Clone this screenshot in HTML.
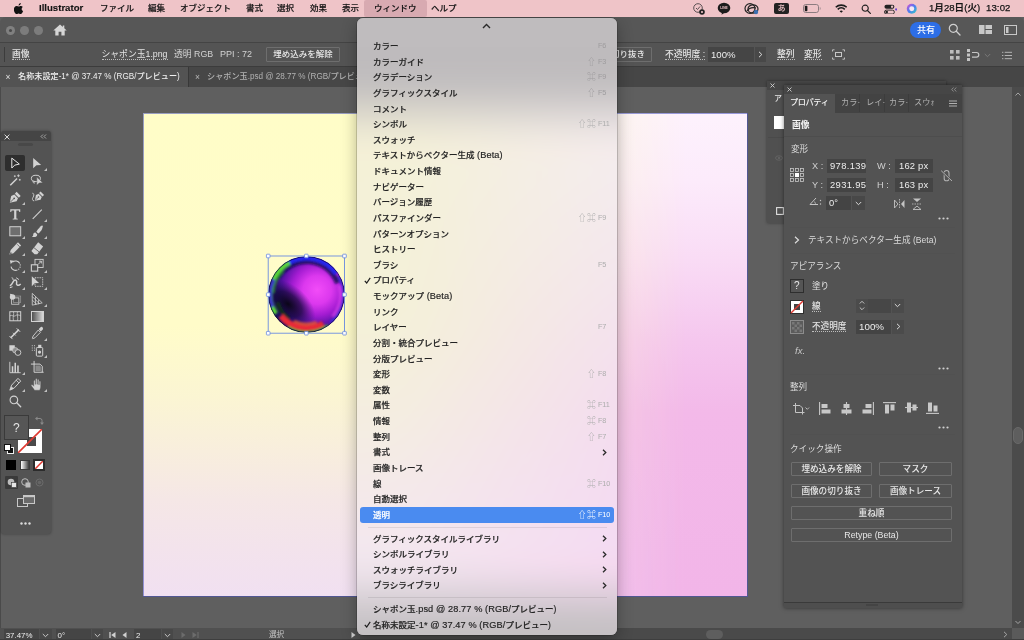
<!DOCTYPE html>
<html lang="ja">
<head>
<meta charset="utf-8">
<title>Illustrator</title>
<style>
*{box-sizing:border-box;margin:0;padding:0}
html,body{width:1024px;height:640px;overflow:hidden;background:#5f5f5f}
body{font-family:"Liberation Sans","Noto Sans CJK JP",sans-serif;font-size:9px;color:#e4e4e4;position:relative;-webkit-font-smoothing:antialiased}
.abs{position:absolute}
.t{position:absolute;white-space:nowrap;line-height:12px;height:12px}
.u{border-bottom:1px dotted #bdbdbd}
/* mac menubar */
#menubar{left:0;top:0;width:1024px;height:17px;background:#efc4c8;color:#111}
#menubar .t{font-size:8.5px;top:2px;color:#141414;font-weight:500;-webkit-text-stroke:.15px #141414}
/* app window */
#win{left:0;top:17px;width:1024px;height:623px;background:#5f5f5f;border-radius:6px 6px 0 0;overflow:hidden}
#titlebar{left:0;top:0;width:1024px;height:25px;background:#575757}
#ctrl{left:0;top:25px;width:1024px;height:24px;background:#545454;border-top:1px solid #444}
#tabs{left:0;top:49px;width:1024px;height:21px;background:#464646;border-top:1px solid #3c3c3c}
.tl{width:9px;height:9px;border-radius:50%;background:#7c7c7c;top:9px}
.btn{position:absolute;border:1px solid #6e6e6e;border-radius:1px;text-align:center;white-space:nowrap;color:#e8e8e8}
.inp{position:absolute;background:#444;color:#eee;white-space:nowrap;overflow:hidden}
.mi{font-size:8.500px;font-weight:500;-webkit-text-stroke:.18px}
.la{font-size:9.200px;letter-spacing:.1px}
.sc{font-size:7.300px;letter-spacing:-.15px}
.sy{font-family:"Noto Sans CJK JP","DejaVu Sans",sans-serif;font-size:8.800px;letter-spacing:.3px;font-weight:500}
</style>
</head>
<body>
<div id="root" class="abs" style="left:0;top:0;width:1024px;height:640px;will-change:transform">
<!-- ===== APP WINDOW ===== -->
<div id="win" class="abs">
  <div id="titlebar" class="abs">
    <div class="abs tl" style="left:6px;background:#808080"></div>
    <div class="abs" style="left:9px;top:12px;width:3px;height:3px;border-radius:50%;background:#4a4a4a"></div>
    <div class="abs tl" style="left:20px"></div>
    <div class="abs tl" style="left:34px"></div>
    <svg class="abs" style="left:53px;top:7px" width="14" height="12" viewBox="0 0 14 12"><path d="M7 .5L.3 6.400h2V11.500h3.300V7.800h2.800v3.700h3.300V6.400h2L11.300 4.300V1.500H9.800v1.500z" fill="#d6d6d6"/></svg>
    <div class="abs" style="left:910px;top:5px;width:31px;height:16px;border-radius:8px;background:#2d6ee6"></div>
    <span class="t" style="left:917px;top:7px;color:#fff;font-size:9px;font-weight:500">共有</span>
    <svg class="abs" style="left:948px;top:6px" width="13" height="13" viewBox="0 0 13 13"><circle cx="5.300" cy="5.300" r="4" fill="none" stroke="#cfcfcf" stroke-width="1.200"/><path d="M8.300 8.300l3.700 3.700" stroke="#cfcfcf" stroke-width="1.300" stroke-linecap="round"/></svg>
    <svg class="abs" style="left:979px;top:8px" width="13" height="9" viewBox="0 0 13 9"><rect x="0" y="0" width="5.500" height="9" fill="#c8c8c8"/><rect x="6.500" y="0" width="6.500" height="4" fill="#c8c8c8"/><rect x="6.500" y="5" width="6.500" height="4" fill="#c8c8c8"/></svg>
    <svg class="abs" style="left:1004px;top:8px" width="13" height="10" viewBox="0 0 13 10"><rect x=".5" y=".5" width="12" height="9" fill="none" stroke="#c8c8c8" stroke-width="1"/><rect x="2" y="2" width="2.500" height="6" fill="#c8c8c8"/></svg>
  </div>
  <div id="ctrl" class="abs">
    <div class="abs" style="left:4px;top:4px;width:1px;height:15px;background:#3c3c3c"></div>
    <span class="t u" style="left:12px;top:5px;font-size:8.800px;font-weight:500">画像</span>
    <span class="t u" style="left:101.500px;top:5px;font-size:8.800px">シャポン玉1.png</span>
    <span class="t" style="left:174px;top:5px;font-size:8.800px;color:#d2d2d2">透明 RGB</span>
    <span class="t" style="left:220px;top:5px;font-size:9px;color:#d2d2d2">PPI : 72</span>
    <div class="btn" style="left:266px;top:4px;width:74px;height:15px;line-height:13px;font-size:8.500px;font-weight:500">埋め込みを解除</div>
    <div class="abs" style="left:610px;top:0;width:50px;height:24px;overflow:hidden"><div class="btn" style="left:-30px;top:4px;width:72px;height:15px;line-height:13px;font-size:8.500px;font-weight:500;text-align:right;padding-right:6px">画像の切り抜き</div></div>
    <span class="t u" style="left:665px;top:5px;font-size:8.800px;font-weight:500">不透明度 :</span>
    <div class="inp" style="left:708px;top:4px;width:46px;height:15px;line-height:15px;padding-left:3px;font-size:9.600px;background:#454545">100%</div>
    <div class="abs" style="left:755px;top:4px;width:11px;height:15px;background:#484848"></div>
    <svg class="abs" style="left:758px;top:8px" width="5" height="7" viewBox="0 0 5 7"><path d="M1 .8l2.800 2.700L1 6.200" fill="none" stroke="#ddd" stroke-width="1"/></svg>
    <span class="t u" style="left:777px;top:5px;font-size:8.800px;font-weight:500">整列</span>
    <span class="t u" style="left:804px;top:5px;font-size:8.800px;font-weight:500">変形</span>
    <svg class="abs" style="left:832px;top:6px" width="13" height="11" viewBox="0 0 13 11"><rect x="3.500" y="3.500" width="6" height="4" fill="none" stroke="#c8c8c8" stroke-width="1"/><path d="M.5 2.500V.8h2M10.500.8h2v1.700M.5 8.500v1.700h2M10.500 10.200h2V8.500" fill="none" stroke="#c8c8c8" stroke-width=".9"/></svg>
    <svg class="abs" style="left:950px;top:7px" width="10" height="10" viewBox="0 0 10 10"><g fill="#bdbdbd"><rect x="0" y="0" width="3.600" height="3.600"/><rect x="6" y="0" width="3.600" height="3.600"/><rect x="0" y="6" width="3.600" height="3.600"/><rect x="6" y="6" width="3.600" height="3.600"/></g></svg>
    <svg class="abs" style="left:967px;top:6px" width="14" height="12" viewBox="0 0 14 12"><g fill="#c4c4c4"><rect x="0" y="0" width="3" height="3"/><rect x="0" y="4.500" width="3" height="3"/><rect x="0" y="9" width="3" height="3"/></g><path d="M5 3.500h4.500a2.300 2.300 0 0 1 0 4.600H5" fill="none" stroke="#c4c4c4" stroke-width="1.200"/></svg>
    <svg class="abs" style="left:984px;top:10px" width="7" height="5" viewBox="0 0 7 5"><path d="M.8 1l2.700 2.700L6.200 1" fill="none" stroke="#7a7a7a" stroke-width="1"/></svg>
    <svg class="abs" style="left:1002px;top:8px" width="10" height="9" viewBox="0 0 11 9"><g stroke="#b4b4b4" stroke-width="1.100"><path d="M0 1h1.500M3 1h8M0 4.500h1.500M3 4.500h8M0 8h1.500M3 8h8"/></g></svg>
  </div>
  <div id="tabs" class="abs">
    <div class="abs" style="left:0;top:0;width:188px;height:20px;background:#535353"></div>
    <span class="t" style="left:5.500px;top:3.500px;font-size:8.500px;color:#e0e0e0">×</span>
    <span class="t" style="left:18px;top:4px;font-size:8.150px;color:#f0f0f0;font-weight:500">名称未設定-1* @ 37.47 % (RGB/プレビュー)</span>
    <div class="abs" style="left:188px;top:0;width:1px;height:20px;background:#383838"></div>
    <div class="abs" style="left:189px;top:0;width:280px;height:20px;background:#474747"></div>
    <span class="t" style="left:195px;top:3.500px;font-size:8.500px;color:#b8b8b8">×</span>
    <span class="t" style="left:207px;top:4px;font-size:8.150px;color:#b2b2b2;font-weight:500">シャポン玉.psd @ 28.77 % (RGB/プレビュー)</span>
  </div>
  <!-- canvas / artboard -->
  <div id="artboard" class="abs" style="left:143px;top:96px;width:604px;height:483px;background:linear-gradient(180deg,#fdf2fd 0%,#fcebfb 14%,#f9dcf5 30%,#f5c7ee 47%,#f3b9e9 62%,#f2b5e8 100%);">
    <div class="abs" style="left:0;top:0;width:604px;height:483px;background:linear-gradient(180deg,#fffdc8 0%,#fffcc9 44%,#fbf5d3 59%,#f8eedd 70%,#f5e7e6 80%,#f3e3ec 90%,#f1e0f1 100%);-webkit-mask-image:linear-gradient(90deg,#000 0%,#000 42%,rgba(0,0,0,.5) 66%,rgba(0,0,0,0) 90%);mask-image:linear-gradient(90deg,#000 0%,#000 42%,rgba(0,0,0,.5) 66%,rgba(0,0,0,0) 90%)"></div>
    <div class="abs" style="left:-.5px;top:-.5px;width:605px;height:484px;border:1px solid rgba(70,80,190,.55)"></div>
  </div>
  <svg id="bubble" class="abs" style="left:263.400px;top:233.400px" width="88" height="88" viewBox="0 0 88 88">
    <defs>
      <radialGradient id="bg1" cx="64%" cy="44%" r="66%"><stop offset="0" stop-color="#f24cf8"/><stop offset=".28" stop-color="#dc38ee"/><stop offset=".5" stop-color="#a41cd2"/><stop offset=".7" stop-color="#5c12a8"/><stop offset=".88" stop-color="#2a0e78"/><stop offset="1" stop-color="#140a50"/></radialGradient>
      <radialGradient id="bg2" cx="50%" cy="50%" r="50%"><stop offset="0" stop-color="#05050f" stop-opacity=".95"/><stop offset=".5" stop-color="#0a0830" stop-opacity=".7"/><stop offset="1" stop-color="#1a1260" stop-opacity="0"/></radialGradient>
      <clipPath id="bc"><circle cx="43.5" cy="44.5" r="38.3"/></clipPath>
      <filter id="bb" x="-20%" y="-20%" width="140%" height="140%"><feGaussianBlur stdDeviation="1.300"/></filter>
    </defs>
    <g clip-path="url(#bc)">
      <circle cx="43.5" cy="44.5" r="38.3" fill="url(#bg1)"/>
      <ellipse cx="25" cy="54" rx="32" ry="19" transform="rotate(40 25 54)" fill="url(#bg2)"/>
      <g filter="url(#bb)" fill="none">
        <path d="M14.9 28.0A33 33 0 0 1 74.5 33.2" stroke="#0c0c50" stroke-width="5" opacity=".8"/>
        <path d="M22.6 14.6A36.5 36.5 0 0 1 73.4 23.6" stroke="#2828f0" stroke-width="5"/>
        <path d="M12.7 63.7A36.3 36.3 0 0 1 26.5 12.4" stroke="#58d838" stroke-width="4.500"/>
        <path d="M10.5 43.3A33 33 0 0 1 20.2 21.2" stroke="#2a8a30" stroke-width="2.500" opacity=".8"/>
        <path d="M9.2 57.0A36.5 36.5 0 0 1 10.4 29.1" stroke="#3a2cc8" stroke-width="4"/>
        <path d="M26.3 69.1A30 30 0 0 1 14.5 52.3" stroke="#0c3a14" stroke-width="4" opacity=".8"/>
        <path d="M60.2 73.5A33.5 33.5 0 0 1 17.8 66.0" stroke="#e82c38" stroke-width="6"/>
        <path d="M53.6 72.2A29.5 29.5 0 0 1 31.0 71.2" stroke="#f0602a" stroke-width="3" opacity=".75"/>
        <path d="M65.0 75.2A37.5 37.5 0 0 1 24.8 77.0" stroke="#2aa83c" stroke-width="2.200"/>
        <path d="M75.5 26.0A37 37 0 0 1 67.3 72.8" stroke="#3030d8" stroke-width="2.500" opacity=".9"/>
        <path d="M76.3 35.7A34 34 0 0 1 69.5 66.4" stroke="#e84af4" stroke-width="3" opacity=".6"/>
      </g>
      <circle cx="43.5" cy="44.5" r="37.9" fill="none" stroke="#0a0a3c" stroke-width="1" opacity=".75"/>
    </g>
    <rect x="5.200" y="6" width="76.300" height="77.200" fill="none" stroke="#6a8ce0" stroke-width=".9"/>
    <g fill="#fff" stroke="#6a8ce0" stroke-width=".8"><rect x="3.40" y="4.20" width="3.600" height="3.600" rx=".6"/><rect x="41.55" y="4.20" width="3.600" height="3.600" rx=".6"/><rect x="79.70" y="4.20" width="3.600" height="3.600" rx=".6"/><rect x="3.40" y="42.80" width="3.600" height="3.600" rx=".6"/><rect x="79.70" y="42.80" width="3.600" height="3.600" rx=".6"/><rect x="3.40" y="81.40" width="3.600" height="3.600" rx=".6"/><rect x="41.55" y="81.40" width="3.600" height="3.600" rx=".6"/><rect x="79.70" y="81.40" width="3.600" height="3.600" rx=".6"/></g>
  </svg>
  <div class="abs" style="left:0;top:70px;width:1px;height:541px;background:#4a4a4a"></div>
  <!-- right vertical scrollbar -->
  <div class="abs" style="left:1012px;top:70px;width:12px;height:541px;background:#4b4b4b"></div>
  <svg class="abs" style="left:1015px;top:74.500px" width="6" height="4.500" viewBox="0 0 7 5"><path d="M.5 4L3.500 1l3 3" fill="none" stroke="#b4b4b4" stroke-width="1"/></svg>
  <svg class="abs" style="left:1015px;top:602.500px" width="6" height="4.500" viewBox="0 0 7 5"><path d="M.5 1l3 3 3-3" fill="none" stroke="#b4b4b4" stroke-width="1"/></svg>
  <div class="abs" style="left:1013px;top:410px;width:10px;height:17px;border-radius:5px;background:#5e5e5e;border:1px solid #696969"></div>
  <!-- status bar -->
  <div id="status" class="abs" style="left:0;top:611px;width:1024px;height:12px;background:#505050;overflow:hidden">
    <div class="abs" style="left:360px;top:0;width:652px;height:12px;background:#4a4a4a"></div>
    <div class="abs" style="left:1012px;top:0;width:12px;height:12px;background:#5a5a5a"></div>
    <div class="abs" style="left:4px;top:1px;width:35px;height:11px;background:#454545"></div>
    <div class="abs" style="left:40px;top:1px;width:12px;height:11px;background:#484848"></div>
    <span class="t" style="left:5.700px;top:2px;font-size:7.900px;color:#ececec">37.47%</span>
    <svg class="abs" style="left:42px;top:5px" width="7" height="5" viewBox="0 0 7 5"><path d="M.8 1l2.700 2.700L6.200 1" fill="none" stroke="#c8c8c8" stroke-width="1"/></svg>
    <div class="abs" style="left:56px;top:1px;width:35px;height:11px;background:#454545"></div>
    <div class="abs" style="left:92px;top:1px;width:11px;height:11px;background:#484848"></div>
    <span class="t" style="left:57.500px;top:2px;font-size:7.900px;color:#ececec">0°</span>
    <svg class="abs" style="left:94px;top:5px" width="7" height="5" viewBox="0 0 7 5"><path d="M.8 1l2.700 2.700L6.200 1" fill="none" stroke="#c8c8c8" stroke-width="1"/></svg>
    <svg class="abs" style="left:109px;top:4px" width="7" height="6" viewBox="0 0 7 6"><path d="M1 0v6" stroke="#d0d0d0" stroke-width="1.300"/><path d="M6.500 0L2.200 3l4.300 3z" fill="#d0d0d0"/></svg>
    <svg class="abs" style="left:122px;top:4px" width="5" height="6" viewBox="0 0 5 6"><path d="M4.500 0L.5 3l4 3z" fill="#d0d0d0"/></svg>
    <div class="abs" style="left:134px;top:1px;width:27px;height:11px;background:#454545"></div>
    <div class="abs" style="left:162px;top:1px;width:11px;height:11px;background:#484848"></div>
    <span class="t" style="left:136px;top:2px;font-size:7.900px;color:#ececec">2</span>
    <svg class="abs" style="left:164px;top:5px" width="7" height="5" viewBox="0 0 7 5"><path d="M.8 1l2.700 2.700L6.200 1" fill="none" stroke="#c8c8c8" stroke-width="1"/></svg>
    <svg class="abs" style="left:181px;top:4px" width="5" height="6" viewBox="0 0 5 6"><path d="M.5 0l4 3-4 3z" fill="#6c6c6c"/></svg>
    <svg class="abs" style="left:192px;top:4px" width="7" height="6" viewBox="0 0 7 6"><path d="M6 0v6" stroke="#6c6c6c" stroke-width="1.200"/><path d="M.5 0l4.300 3L.5 6z" fill="#6c6c6c"/></svg>
    <span class="t" style="left:269px;top:1px;font-size:7.600px;color:#c4c4c4">選択</span>
    <svg class="abs" style="left:351px;top:4px" width="5" height="6" viewBox="0 0 5 6"><path d="M.5 0l4 3-4 3z" fill="#d0d0d0"/></svg>
    <div class="abs" style="left:705.500px;top:1.500px;width:17.500px;height:9.500px;border-radius:5px;background:#5e5e5e"></div><div class="abs" style="left:0;top:11px;width:1024px;height:1px;background:#3e3e3e"></div>
    <svg class="abs" style="left:1003px;top:3px" width="5" height="7" viewBox="0 0 5 7"><path d="M1 .8l2.800 2.700L1 6.200" fill="none" stroke="#a8a8a8" stroke-width="1"/></svg>
  </div>
  <div id="tools" class="abs" style="left:0;top:-17px">
    <div class="abs" style="left:1px;top:131px;width:50px;height:403px;background:#535353;border-radius:3px;box-shadow:0 0 3px rgba(0,0,0,.35)"></div>
    <div class="abs" style="left:1px;top:131px;width:50px;height:10px;background:#454545;border-radius:3px 3px 0 0"></div>
    <svg class="abs" style="left:4px;top:134px" width="6" height="6" viewBox="0 0 6 6"><path d="M.6.600l4.800 4.800M5.400.600L.6 5.400" stroke="#d8d8d8" stroke-width="1"/></svg>
    <svg class="abs" style="left:40px;top:134px" width="7" height="5" viewBox="0 0 7 5"><path d="M3 .5L1 2.500l2 2M6 .5L4 2.500l2 2" fill="none" stroke="#bcbcbc" stroke-width=".8"/></svg>
    <div class="abs" style="left:18px;top:143px;width:15px;height:3px;border-radius:1.500px;background:#484848"></div>
    <div class="abs" style="left:5px;top:155px;width:20px;height:16px;border-radius:2px;background:#2e2e2e"></div>
    <svg class="abs" style="left:7.75px;top:155.75px" width="14.500" height="14.500" viewBox="0 0 16 16"><path d="M4.200 2.300v11l3.200-3.200 5.100-1.200z" fill="none" stroke="#e6e6e6" stroke-width="1.100" stroke-linejoin="miter"/></svg><svg class="abs" style="left:29.75px;top:155.75px" width="14.500" height="14.500" viewBox="0 0 16 16"><path d="M3.500 2.300v11.200l3.600-3.400 5.200-.3z" fill="#d2d2d2"/></svg><svg class="abs" style="left:44px;top:168px" width="3" height="3" viewBox="0 0 3 3"><path d="M3 0v3H0z" fill="#c0c0c0"/></svg><svg class="abs" style="left:7.75px;top:172.75px" width="14.500" height="14.500" viewBox="0 0 16 16"><path d="M2.500 13.500L10 6" stroke="#d2d2d2" stroke-width="1.600"/><path d="M11.500 1.500v3M10 3h3M13 6.500v2M12 7.500h2M7.500 2.500v2M6.500 3.500h2" stroke="#d2d2d2" stroke-width=".9"/></svg><svg class="abs" style="left:29.75px;top:172.75px" width="14.500" height="14.500" viewBox="0 0 16 16"><ellipse cx="6.500" cy="6" rx="5" ry="3.500" fill="none" stroke="#d2d2d2" stroke-width="1.100"/><path d="M4 8.500c-1.500 1 -.5 3 1.500 2.500" fill="none" stroke="#d2d2d2" stroke-width="1"/><path d="M7.500 4.500v9l2.600-2.500 4-.3z" fill="#d2d2d2" stroke="#535353" stroke-width=".5"/></svg><svg class="abs" style="left:7.75px;top:189.75px" width="14.500" height="14.500" viewBox="0 0 16 16"><path d="M9.500 2l4.500 4.500-2 2-4.500-4.500z" fill="#d2d2d2"/><path d="M7 5l4 4-1.500 3.500L2 14l1.500-7.500z" fill="#d2d2d2"/><path d="M2.500 13.500l4-4" stroke="#535353" stroke-width=".9"/><circle cx="6.800" cy="9.200" r="1" fill="#535353"/></svg><svg class="abs" style="left:22px;top:202px" width="3" height="3" viewBox="0 0 3 3"><path d="M3 0v3H0z" fill="#c0c0c0"/></svg><svg class="abs" style="left:30.75px;top:189.75px" width="14.500" height="14.500" viewBox="0 0 16 16"><g transform="translate(2.500,0) scale(.85)"><path d="M9.500 2l4.500 4.500-2 2-4.500-4.500z" fill="#d2d2d2"/><path d="M7 5l4 4-1.500 3.500L2 14l1.500-7.500z" fill="#d2d2d2"/><path d="M2.500 13.500l4-4" stroke="#535353" stroke-width=".9"/><circle cx="6.800" cy="9.200" r="1" fill="#535353"/></g><path d="M1.500 3.500c2 0 2 3 .8 4.500s-1 4 1.200 4" fill="none" stroke="#d2d2d2" stroke-width="1"/></svg><svg class="abs" style="left:7.75px;top:206.75px" width="14.500" height="14.500" viewBox="0 0 16 16"><path d="M2.500 2.500h11v3h-1l-.5-1.600H9.200v8.700l1.600.4v.8H5.200v-.8l1.600-.4V3.900H4l-.5 1.600h-1z" fill="#d2d2d2"/></svg><svg class="abs" style="left:22px;top:219px" width="3" height="3" viewBox="0 0 3 3"><path d="M3 0v3H0z" fill="#c0c0c0"/></svg><svg class="abs" style="left:29.75px;top:206.75px" width="14.500" height="14.500" viewBox="0 0 16 16"><path d="M3 13L13 3" stroke="#d2d2d2" stroke-width="1.200"/></svg><svg class="abs" style="left:44px;top:219px" width="3" height="3" viewBox="0 0 3 3"><path d="M3 0v3H0z" fill="#c0c0c0"/></svg><svg class="abs" style="left:7.75px;top:223.75px" width="14.500" height="14.500" viewBox="0 0 16 16"><rect x="2" y="3" width="12" height="10" fill="#6e6e6e" stroke="#d2d2d2" stroke-width="1.100"/></svg><svg class="abs" style="left:22px;top:236px" width="3" height="3" viewBox="0 0 3 3"><path d="M3 0v3H0z" fill="#c0c0c0"/></svg><svg class="abs" style="left:29.75px;top:223.75px" width="14.500" height="14.500" viewBox="0 0 16 16"><path d="M13.500 1.500c-2 1-5 4.500-6.500 7l2 2c2.500-1.500 5-5 5-8z" fill="#d2d2d2"/><path d="M6 9.500c-2 0-2.500 1.500-2.500 3 0 1-1 1.500-1.500 1.500 2.500 1 6 .5 6-2.500z" fill="#d2d2d2"/></svg><svg class="abs" style="left:44px;top:236px" width="3" height="3" viewBox="0 0 3 3"><path d="M3 0v3H0z" fill="#c0c0c0"/></svg><svg class="abs" style="left:7.75px;top:240.75px" width="14.500" height="14.500" viewBox="0 0 16 16"><path d="M11 1.500l3.500 3.500-8.500 8.500-4.500 1.500 1.500-5z" fill="#d2d2d2"/><path d="M10 3.500l3 3" stroke="#535353" stroke-width=".8"/><path d="M2 14.500l1-2.500 1.500 1.500z" fill="#535353"/></svg><svg class="abs" style="left:22px;top:253px" width="3" height="3" viewBox="0 0 3 3"><path d="M3 0v3H0z" fill="#c0c0c0"/></svg><svg class="abs" style="left:29.75px;top:240.75px" width="14.500" height="14.500" viewBox="0 0 16 16"><path d="M9 1.500l5.500 4.500-6.500 8.500H5L1.500 11z" fill="#d2d2d2"/><path d="M4.500 7.500l5.500 4.500" stroke="#535353" stroke-width=".9"/></svg><svg class="abs" style="left:44px;top:253px" width="3" height="3" viewBox="0 0 3 3"><path d="M3 0v3H0z" fill="#c0c0c0"/></svg><svg class="abs" style="left:7.75px;top:257.75px" width="14.500" height="14.500" viewBox="0 0 16 16"><path d="M5 4.500a5.200 5.200 0 1 1-1.700 5" fill="none" stroke="#d2d2d2" stroke-width="1.200" stroke-dasharray="9 1.200 1.200 1.200 1.200 1.200 1.200 1.200 20"/><path d="M2 2.500l4.500.5-3.500 3.500z" fill="#d2d2d2"/></svg><svg class="abs" style="left:22px;top:270px" width="3" height="3" viewBox="0 0 3 3"><path d="M3 0v3H0z" fill="#c0c0c0"/></svg><svg class="abs" style="left:29.75px;top:257.75px" width="14.500" height="14.500" viewBox="0 0 16 16"><rect x="5.500" y="1.500" width="9" height="9" fill="none" stroke="#d2d2d2" stroke-width="1"/><rect x="1.500" y="7.500" width="7" height="7" fill="#535353" stroke="#d2d2d2" stroke-width="1.200"/><path d="M9 7l3.500-3.500M10 3.500h2.500v2.500" fill="none" stroke="#d2d2d2" stroke-width="1"/></svg><svg class="abs" style="left:44px;top:270px" width="3" height="3" viewBox="0 0 3 3"><path d="M3 0v3H0z" fill="#c0c0c0"/></svg><svg class="abs" style="left:7.75px;top:274.75px" width="14.500" height="14.500" viewBox="0 0 16 16"><path d="M2 12c2-1 3-3 4-5s3-2 3.500 0-1 3 .5 4 3 0 4-1" fill="none" stroke="#d2d2d2" stroke-width="1.600"/><path d="M4 3c1 0 2 1 1.500 2.500M9 3l3 2M2 14l3-1" stroke="#d2d2d2" stroke-width="1.100" fill="none"/></svg><svg class="abs" style="left:22px;top:287px" width="3" height="3" viewBox="0 0 3 3"><path d="M3 0v3H0z" fill="#c0c0c0"/></svg><svg class="abs" style="left:29.75px;top:274.75px" width="14.500" height="14.500" viewBox="0 0 16 16"><rect x="5.500" y="3" width="8.500" height="9.500" fill="none" stroke="#d2d2d2" stroke-width="1" stroke-dasharray="1.500 1"/><path d="M2 1.500v11l3.200-3.400 4.800-.4z" fill="#d2d2d2"/></svg><svg class="abs" style="left:44px;top:287px" width="3" height="3" viewBox="0 0 3 3"><path d="M3 0v3H0z" fill="#c0c0c0"/></svg><svg class="abs" style="left:7.75px;top:291.75px" width="14.500" height="14.500" viewBox="0 0 16 16"><rect x="4" y="6.500" width="8" height="7" fill="none" stroke="#d2d2d2" stroke-width=".9"/><rect x="6" y="4.500" width="8" height="7" fill="none" stroke="#9a9a9a" stroke-width=".8"/><circle cx="5" cy="5.500" r="3" fill="#d2d2d2"/><path d="M2 2l3 .5-2 2z" fill="#d2d2d2"/></svg><svg class="abs" style="left:22px;top:304px" width="3" height="3" viewBox="0 0 3 3"><path d="M3 0v3H0z" fill="#c0c0c0"/></svg><svg class="abs" style="left:29.75px;top:291.75px" width="14.500" height="14.500" viewBox="0 0 16 16"><path d="M2.500 1.500v13M2.500 1.500l11 10.500M2.500 14.500l11-2.500M2.500 5l8 8M2.500 9l5 4.500M6 5v9M9.500 8.500v5" fill="none" stroke="#d2d2d2" stroke-width=".9"/></svg><svg class="abs" style="left:44px;top:304px" width="3" height="3" viewBox="0 0 3 3"><path d="M3 0v3H0z" fill="#c0c0c0"/></svg><svg class="abs" style="left:7.75px;top:308.75px" width="14.500" height="14.500" viewBox="0 0 16 16"><rect x="2" y="3" width="12" height="10" fill="none" stroke="#d2d2d2" stroke-width="1.100"/><path d="M2 7.500c3-1.500 4 1.500 6 0s4-1 6 0M6 3c1 3-1 5 0 10M10.500 3c-1 3 1 6 0 10" fill="none" stroke="#d2d2d2" stroke-width=".8"/></svg><svg class="abs" style="left:31px;top:311px" width="13" height="11" viewBox="0 0 13 11"><defs><linearGradient id="gt" x1="0" x2="1"><stop offset="0" stop-color="#4a4a4a"/><stop offset="1" stop-color="#e0e0e0"/></linearGradient></defs><rect x=".5" y=".5" width="12" height="10" fill="url(#gt)" stroke="#d2d2d2" stroke-width="1"/></svg><svg class="abs" style="left:7.75px;top:325.75px" width="14.500" height="14.500" viewBox="0 0 16 16"><path d="M3 13l9-9" stroke="#d2d2d2" stroke-width="1.800"/><path d="M1.500 11l3.500 3.500M9.500 2.500l4 4M5.500 7.500l3 3" stroke="#d2d2d2" stroke-width="1"/></svg><svg class="abs" style="left:29.75px;top:325.75px" width="14.500" height="14.500" viewBox="0 0 16 16"><path d="M13.500 1c1.500 1.500 1 3-0.500 4l-1 1-2.500-2.500 1-1c1-1.500 2-2 3-1.500z" fill="#d2d2d2"/><path d="M9 4.500l2.500 2.500-6 6-2.500 1-.5-.5 1-2.500z" fill="none" stroke="#d2d2d2" stroke-width="1"/></svg><svg class="abs" style="left:44px;top:338px" width="3" height="3" viewBox="0 0 3 3"><path d="M3 0v3H0z" fill="#c0c0c0"/></svg><svg class="abs" style="left:7.75px;top:342.75px" width="14.500" height="14.500" viewBox="0 0 16 16"><rect x="1.500" y="2.500" width="6" height="6" fill="#d2d2d2"/><circle cx="8" cy="8" r="3" fill="#8c8c8c" stroke="#d2d2d2" stroke-width=".7"/><circle cx="11" cy="10.500" r="3.200" fill="#535353" stroke="#d2d2d2" stroke-width="1"/></svg><svg class="abs" style="left:29.75px;top:342.75px" width="14.500" height="14.500" viewBox="0 0 16 16"><rect x="7" y="5" width="7" height="9.500" rx="1" fill="none" stroke="#d2d2d2" stroke-width="1.100"/><rect x="9" y="2" width="3.500" height="3" fill="#d2d2d2"/><circle cx="10.500" cy="10" r="1.800" fill="#d2d2d2"/><path d="M2 3h1M4.500 3h1M2 5.500h1M4.500 5.500h1M2 8h1M4.500 8h1" stroke="#d2d2d2" stroke-width="1.100"/></svg><svg class="abs" style="left:44px;top:355px" width="3" height="3" viewBox="0 0 3 3"><path d="M3 0v3H0z" fill="#c0c0c0"/></svg><svg class="abs" style="left:7.75px;top:359.75px" width="14.500" height="14.500" viewBox="0 0 16 16"><path d="M2 2v12h12" fill="none" stroke="#d2d2d2" stroke-width="1"/><path d="M5 14V7M8 14V3M11 14V6" stroke="#d2d2d2" stroke-width="1.700"/></svg><svg class="abs" style="left:22px;top:372px" width="3" height="3" viewBox="0 0 3 3"><path d="M3 0v3H0z" fill="#c0c0c0"/></svg><svg class="abs" style="left:29.75px;top:359.75px" width="14.500" height="14.500" viewBox="0 0 16 16"><path d="M4.500 1v12.500H15M1 4.500h10l2.500 2.500v6.500" fill="none" stroke="#d2d2d2" stroke-width="1.100"/><path d="M6 6h5l1 1.500v4.500H6z" fill="#8a8a8a"/></svg><svg class="abs" style="left:7.75px;top:376.75px" width="14.500" height="14.500" viewBox="0 0 16 16"><path d="M11 1.500l3 3-7 7.500-5 2.500 2-5.500z" fill="none" stroke="#d2d2d2" stroke-width="1.100"/><path d="M9 3.500l3 3" stroke="#d2d2d2" stroke-width="1"/><path d="M2 14.500l2-4 2.500 2.500z" fill="#d2d2d2"/></svg><svg class="abs" style="left:22px;top:389px" width="3" height="3" viewBox="0 0 3 3"><path d="M3 0v3H0z" fill="#c0c0c0"/></svg><svg class="abs" style="left:29.75px;top:376.75px" width="14.500" height="14.500" viewBox="0 0 16 16"><path d="M5 14.500C3.800 12.800 2.200 10.800 1.300 9.200c.6-1 1.800-.6 2.900 1V4.300c0-1.100 1.500-1.100 1.500 0V8h.5V2.600c0-1.100 1.500-1.100 1.500 0V8h.5V3.200c0-1.100 1.500-1.100 1.500 0V8.500h.5V5.200c0-1.100 1.500-1.100 1.500 0v5.300c0 1.800-.5 3-1.100 4z" fill="#d2d2d2" stroke="#535353" stroke-width=".35"/></svg><svg class="abs" style="left:44px;top:389px" width="3" height="3" viewBox="0 0 3 3"><path d="M3 0v3H0z" fill="#c0c0c0"/></svg><svg class="abs" style="left:7.75px;top:393.75px" width="14.500" height="14.500" viewBox="0 0 16 16"><circle cx="6.500" cy="6.500" r="4.200" fill="none" stroke="#d2d2d2" stroke-width="1.200"/><path d="M9.700 9.700l4.300 4.300" stroke="#d2d2d2" stroke-width="1.500" stroke-linecap="round"/></svg>
    <!-- fill / stroke -->
    <div class="abs" style="left:18px;top:429px;width:24px;height:24px;background:#fff"></div>
    <div class="abs" style="left:27px;top:437px;width:9px;height:9px;background:#4a4a4a"></div>
    <svg class="abs" style="left:18px;top:429px" width="24" height="24" viewBox="0 0 24 24"><path d="M0 24L24 0" stroke="#e03a32" stroke-width="1.600"/></svg>
    <div class="abs" style="left:4px;top:415px;width:25px;height:25px;background:#565656;border:1px solid #3a3a3a"></div>
    <span class="t" style="left:13px;top:421px;font-size:12px;line-height:14px;height:14px;color:#e4e4e4">?</span>
    <svg class="abs" style="left:35px;top:416px" width="9" height="9" viewBox="0 0 9 9"><path d="M2 2.500h3a2 2 0 0 1 2 2v3" fill="none" stroke="#8a8a8a" stroke-width="1"/><path d="M0 2.500L2.500.5v4zM7 9L5 6.500h4z" fill="#8a8a8a"/></svg>
    <svg class="abs" style="left:4px;top:444px" width="10" height="10" viewBox="0 0 10 10"><rect x="3.500" y="3.500" width="6" height="6" fill="#111" stroke="#eee" stroke-width="1"/><rect x=".5" y=".5" width="6" height="6" fill="#fff" stroke="#111" stroke-width="1"/></svg>
    <div class="abs" style="left:6px;top:460px;width:10px;height:10px;background:#000"></div>
    <div class="abs" style="left:20px;top:460px;width:10px;height:10px;background:linear-gradient(90deg,#fff,#3a3a3a);border:1px solid #3c3c3c"></div>
    <div class="abs" style="left:33px;top:459px;width:12px;height:12px;background:#2c2c2c"></div>
    <svg class="abs" style="left:35px;top:461px" width="8" height="8" viewBox="0 0 8 8"><rect width="8" height="8" fill="#fff"/><path d="M0 8L8 0" stroke="#e03a32" stroke-width="1.500"/></svg>
    <div class="abs" style="left:5px;top:476px;width:13px;height:13px;background:#3a3a3a;border-radius:1px"></div>
    <svg class="abs" style="left:7px;top:478px" width="10" height="10" viewBox="0 0 10 10"><circle cx="4" cy="4" r="3.300" fill="#bdbdbd"/><rect x="4.500" y="4.500" width="5" height="5" fill="#e6e6e6" stroke="#3a3a3a" stroke-width=".6"/></svg>
    <svg class="abs" style="left:21px;top:478px" width="10" height="10" viewBox="0 0 10 10"><circle cx="4" cy="4" r="3.300" fill="none" stroke="#bdbdbd" stroke-width="1"/><rect x="4.500" y="4.500" width="5" height="5" fill="#bdbdbd"/></svg>
    <svg class="abs" style="left:35px;top:478px" width="10" height="10" viewBox="0 0 10 10"><circle cx="4.500" cy="4.500" r="3.500" fill="none" stroke="#6c6c6c" stroke-width="1"/><circle cx="4.500" cy="4.500" r="1.800" fill="#666"/></svg>
    <svg class="abs" style="left:17px;top:495px" width="18" height="12" viewBox="0 0 18 12"><rect x=".5" y="3.500" width="10" height="8" fill="#535353" stroke="#c8c8c8" stroke-width="1"/><rect x="6.500" y=".5" width="11" height="8" fill="#6a6a6a" stroke="#c8c8c8" stroke-width="1"/><path d="M6.500 1.500h11" stroke="#c8c8c8" stroke-width="1.400"/></svg>
    <svg class="abs" style="left:20px;top:522px" width="11" height="3" viewBox="0 0 11 3"><circle cx="1.500" cy="1.500" r="1.200" fill="#dcdcdc"/><circle cx="5.500" cy="1.500" r="1.200" fill="#dcdcdc"/><circle cx="9.500" cy="1.500" r="1.200" fill="#dcdcdc"/></svg>
  </div>
  <div id="rpanels" class="abs" style="left:0;top:-17px">
    <!-- back panel -->
    <div class="abs" style="left:767px;top:81px;width:179px;height:142px;background:#505050;box-shadow:0 0 3px rgba(0,0,0,.4)"></div>
    <div class="abs" style="left:767px;top:81px;width:179px;height:9px;background:#464646"></div>
    <svg class="abs" style="left:770px;top:83px" width="5" height="5" viewBox="0 0 5 5"><path d="M.5.500l4 4M4.500.500l-4 4" stroke="#d0d0d0" stroke-width=".9"/></svg>
    <span class="t" style="left:774px;top:93px;font-size:8px;color:#e6e6e6;font-weight:500">ア</span>
    <div class="abs" style="left:774px;top:116px;width:12px;height:13px;background:#fff"></div>
    <div class="abs" style="left:768px;top:137px;width:16px;height:1px;background:#4a4a4a"></div>
    <svg class="abs" style="left:775px;top:155px" width="8" height="6" viewBox="0 0 8 6"><ellipse cx="4" cy="3" rx="3.500" ry="2.200" fill="none" stroke="#686868" stroke-width=".8"/><circle cx="4" cy="3" r="1" fill="#686868"/></svg>
    <svg class="abs" style="left:776px;top:207px" width="8" height="8" viewBox="0 0 8 8"><rect x=".6" y=".6" width="6.800" height="6.800" fill="none" stroke="#e0e0e0" stroke-width="1.100"/></svg>
    <!-- properties panel -->
    <div class="abs" style="left:784px;top:85px;width:178px;height:523px;background:#535353;box-shadow:0 0 4px rgba(0,0,0,.5)"></div>
    <div class="abs" style="left:784px;top:85px;width:178px;height:9px;background:#464646"></div>
    <svg class="abs" style="left:787px;top:87px" width="5" height="5" viewBox="0 0 5 5"><path d="M.5.500l4 4M4.500.500l-4 4" stroke="#d0d0d0" stroke-width=".9"/></svg>
    <svg class="abs" style="left:951px;top:87px" width="6" height="5" viewBox="0 0 6 5"><path d="M2.500.500L.8 2.500l1.700 2M5.200.500L3.500 2.500l1.700 2" fill="none" stroke="#a8a8a8" stroke-width=".7"/></svg>
    <div class="abs" style="left:784px;top:94px;width:178px;height:19px;background:#434343"></div>
    <div class="abs" style="left:784px;top:94px;width:51px;height:19px;background:#535353"></div>
    <div class="abs" style="left:859px;top:94px;width:1px;height:18px;background:#3c3c3c"></div>
    <div class="abs" style="left:884px;top:94px;width:1px;height:18px;background:#3c3c3c"></div>
    <div class="abs" style="left:908px;top:94px;width:1px;height:18px;background:#3c3c3c"></div>
    <span class="t" style="left:790px;top:97px;font-size:8.200px;color:#f4f4f4;font-weight:500;letter-spacing:-.4px">プロパティ</span>
    <span class="t" style="left:841px;top:97px;font-size:8.200px;color:#b0b0b0">カラ·</span>
    <span class="t" style="left:866px;top:97px;font-size:8.200px;color:#b0b0b0">レイ·</span>
    <span class="t" style="left:889px;top:97px;font-size:8.200px;color:#b0b0b0">カラ·</span>
    <span class="t" style="left:914px;top:97px;font-size:8.200px;color:#b0b0b0">スウｫ</span>
    <svg class="abs" style="left:949px;top:100px" width="8" height="7" viewBox="0 0 8 7"><path d="M0 1h8M0 3.500h8M0 6h8" stroke="#bcbcbc" stroke-width=".9"/></svg>
    <div class="abs" style="left:784px;top:136px;width:178px;height:1px;background:#4d4d4d"></div>
    <span class="t" style="left:792px;top:119px;font-size:8.800px;color:#f4f4f4;font-weight:700">画像</span>
    <span class="t" style="left:791px;top:143px;font-size:8.600px;color:#dcdcdc">変形</span>
    <svg class="abs" style="left:790px;top:168px" width="14" height="14" viewBox="0 0 14 14"><g fill="none" stroke="#c8c8c8" stroke-width=".8"><rect x=".5" y=".5" width="3" height="3"/><rect x="5.500" y=".5" width="3" height="3"/><rect x="10.500" y=".5" width="3" height="3"/><rect x=".5" y="5.500" width="3" height="3"/><rect x="10.500" y="5.500" width="3" height="3"/><rect x=".5" y="10.500" width="3" height="3"/><rect x="5.500" y="10.500" width="3" height="3"/><rect x="10.500" y="10.500" width="3" height="3"/></g><rect x="5" y="5" width="4" height="4" fill="#fff"/></svg>
    <span class="t" style="left:812px;top:160px;font-size:9.200px;color:#d0d0d0">X :</span>
    <div class="inp" style="left:827px;top:159px;width:39px;height:14px;line-height:14px;padding-left:3px;font-size:9.400px;letter-spacing:.35px">978.139</div>
    <span class="t" style="left:877px;top:160px;font-size:9.200px;color:#d0d0d0">W :</span>
    <div class="inp" style="left:895px;top:159px;width:38px;height:14px;line-height:14px;padding-left:4px;font-size:9.400px;letter-spacing:.2px">162 px</div>
    <span class="t" style="left:812px;top:179px;font-size:9.200px;color:#d0d0d0">Y :</span>
    <div class="inp" style="left:827px;top:178px;width:39px;height:14px;line-height:14px;padding-left:3px;font-size:9.400px;letter-spacing:.35px">2931.95</div>
    <span class="t" style="left:877px;top:179px;font-size:9.200px;color:#d0d0d0">H :</span>
    <div class="inp" style="left:895px;top:178px;width:38px;height:14px;line-height:14px;padding-left:4px;font-size:9.400px;letter-spacing:.2px">163 px</div>
    <svg class="abs" style="left:940px;top:169px" width="13" height="13" viewBox="0 0 13 13"><rect x="4.200" y="1.500" width="4.800" height="10.300" rx="2.400" fill="none" stroke="#b0b0b0" stroke-width="1.100"/><path d="M1 1.500L12 12" stroke="#535353" stroke-width="2.400"/><path d="M1.200 1.700L12 12" stroke="#b0b0b0" stroke-width="1"/></svg>
    <svg class="abs" style="left:809px;top:197px" width="13" height="9" viewBox="0 0 13 9"><path d="M7 1L1 7.500h8" fill="none" stroke="#c4c4c4" stroke-width="1"/><path d="M5 4.500c1 .5 1.500 1.500 1.500 3" fill="none" stroke="#c4c4c4" stroke-width=".8"/><circle cx="11.500" cy="3.500" r=".7" fill="#c4c4c4"/><circle cx="11.500" cy="7" r=".7" fill="#c4c4c4"/></svg>
    <div class="inp" style="left:826px;top:196px;width:25px;height:14px;line-height:14px;padding-left:3px;font-size:9.400px">0°</div>
    <div class="abs" style="left:852px;top:196px;width:13px;height:14px;background:#484848"></div>
    <svg class="abs" style="left:855px;top:201px" width="7" height="5" viewBox="0 0 7 5"><path d="M.8 1l2.700 2.700L6.200 1" fill="none" stroke="#d8d8d8" stroke-width="1"/></svg>
    <svg class="abs" style="left:894px;top:199px" width="11" height="10" viewBox="0 0 11 10"><path d="M.5 1l3.500 4-3.500 4z" fill="none" stroke="#c4c4c4" stroke-width=".9"/><path d="M10.500 1L7 5l3.500 4z" fill="#c4c4c4"/><path d="M5.500 0v10" stroke="#c4c4c4" stroke-width=".8" stroke-dasharray="1.500 1"/></svg>
    <svg class="abs" style="left:912px;top:198px" width="10" height="12" viewBox="0 0 10 12"><path d="M1 .5l4 3.500 4-3.500z" fill="#c4c4c4"/><path d="M1 11.500L5 8l4 3.500z" fill="none" stroke="#c4c4c4" stroke-width=".9"/><path d="M0 6h10" stroke="#c4c4c4" stroke-width=".8" stroke-dasharray="1.500 1"/></svg>
    <svg class="abs" style="left:938px;top:217px" width="11" height="3" viewBox="0 0 11 3"><circle cx="1.500" cy="1.500" r="1.100" fill="#d0d0d0"/><circle cx="5.500" cy="1.500" r="1.100" fill="#d0d0d0"/><circle cx="9.500" cy="1.500" r="1.100" fill="#d0d0d0"/></svg>
    <div class="abs" style="left:790px;top:227px;width:165px;height:1px;background:#515151"></div>
    <svg class="abs" style="left:794px;top:236px" width="6" height="8" viewBox="0 0 6 8"><path d="M1 .8L4.500 4 1 7.200" fill="none" stroke="#dcdcdc" stroke-width="1.200"/></svg>
    <span class="t" style="left:808px;top:234px;font-size:8.600px;color:#dcdcdc">テキストからベクター生成 (Beta)</span>
    <div class="abs" style="left:790px;top:253px;width:165px;height:1px;background:#515151"></div>
    <span class="t" style="left:790px;top:260px;font-size:8.600px;color:#dcdcdc">アピアランス</span>
    <div class="abs" style="left:790px;top:279px;width:14px;height:14px;background:#555;border:1px solid #2e2e2e"></div>
    <span class="t" style="left:794px;top:280px;font-size:10px;color:#e8e8e8">?</span>
    <span class="t" style="left:812px;top:280px;font-size:8.600px;color:#e4e4e4">塗り</span>
    <div class="abs" style="left:790px;top:300px;width:14px;height:14px;background:#fff;border:1px solid #2e2e2e"></div>
    <div class="abs" style="left:794px;top:304px;width:6px;height:6px;background:#444"></div>
    <svg class="abs" style="left:790px;top:300px" width="14" height="14" viewBox="0 0 14 14"><path d="M1 13L13 1" stroke="#e03a32" stroke-width="1.500"/></svg>
    <span class="t u" style="left:812px;top:300px;font-size:8.600px;color:#e4e4e4;font-weight:500">線</span>
    <div class="abs" style="left:856px;top:299px;width:12px;height:14px;background:#4b4b4b"></div>
    <svg class="abs" style="left:859px;top:300px" width="6" height="11" viewBox="0 0 6 11"><path d="M.8 3.500L3 1.300l2.200 2.200M.8 7.500L3 9.700l2.200-2.200" fill="none" stroke="#d0d0d0" stroke-width=".9"/></svg>
    <div class="abs" style="left:868px;top:299px;width:23px;height:14px;background:#474747"></div>
    <div class="abs" style="left:892px;top:299px;width:12px;height:14px;background:#4b4b4b"></div>
    <svg class="abs" style="left:894px;top:303px" width="7" height="5" viewBox="0 0 7 5"><path d="M.8 1l2.700 2.700L6.200 1" fill="none" stroke="#d8d8d8" stroke-width="1"/></svg>
    <svg class="abs" style="left:790px;top:320px" width="14" height="14" viewBox="0 0 14 14"><rect x=".5" y=".5" width="13" height="13" fill="#5c5c5c" stroke="#8c8c8c" stroke-width="1"/><g fill="#787878"><rect x="2" y="2" width="2.500" height="2.500"/><rect x="7" y="2" width="2.500" height="2.500"/><rect x="4.500" y="4.500" width="2.500" height="2.500"/><rect x="9.500" y="4.500" width="2.500" height="2.500"/><rect x="2" y="7" width="2.500" height="2.500"/><rect x="7" y="7" width="2.500" height="2.500"/><rect x="4.500" y="9.500" width="2.500" height="2.500"/><rect x="9.500" y="9.500" width="2.500" height="2.500"/></g></svg>
    <span class="t u" style="left:812px;top:320px;font-size:8.600px;color:#e4e4e4;font-weight:500">不透明度</span>
    <div class="inp" style="left:856px;top:320px;width:35px;height:14px;line-height:14px;padding-left:3px;font-size:9.800px">100%</div>
    <div class="abs" style="left:892px;top:320px;width:12px;height:14px;background:#4b4b4b"></div>
    <svg class="abs" style="left:896px;top:323px" width="5" height="7" viewBox="0 0 5 7"><path d="M1 .8l2.800 2.700L1 6.200" fill="none" stroke="#ddd" stroke-width="1"/></svg>
    <span class="t" style="left:795px;top:345px;font-size:9.500px;color:#c8c8c8;font-style:italic">fx.</span>
    <svg class="abs" style="left:938px;top:367px" width="11" height="3" viewBox="0 0 11 3"><circle cx="1.500" cy="1.500" r="1.100" fill="#d0d0d0"/><circle cx="5.500" cy="1.500" r="1.100" fill="#d0d0d0"/><circle cx="9.500" cy="1.500" r="1.100" fill="#d0d0d0"/></svg>
    <div class="abs" style="left:790px;top:374px;width:165px;height:1px;background:#515151"></div>
    <span class="t" style="left:790px;top:381px;font-size:8.600px;color:#dcdcdc">整列</span>
    <svg class="abs" style="left:793px;top:402.500px" width="17" height="12" viewBox="0 0 17 12"><path d="M2.500 0v9.500H11.500M0 2.500h7l2.500 2.500v6.500" fill="none" stroke="#c4c4c4" stroke-width="1"/><path d="M12.500 4.500l1.800 1.800 1.800-1.800" fill="none" stroke="#c4c4c4" stroke-width=".9"/></svg>
    <svg class="abs" style="left:819px;top:402px" width="12" height="13" viewBox="0 0 12 13"><path d="M.6 0v13" stroke="#c8c8c8" stroke-width="1.100"/><rect x="2.500" y="2" width="6" height="4" fill="#c8c8c8"/><rect x="2.500" y="7.500" width="9" height="4" fill="#c8c8c8"/></svg>
    <svg class="abs" style="left:841px;top:402px" width="11" height="13" viewBox="0 0 11 13"><path d="M5.500 0v13" stroke="#c8c8c8" stroke-width="1.100"/><rect x="2.500" y="2" width="6" height="4" fill="#c8c8c8"/><rect x=".5" y="7.500" width="10" height="4" fill="#c8c8c8"/></svg>
    <svg class="abs" style="left:862px;top:402px" width="12" height="13" viewBox="0 0 12 13"><path d="M11.400 0v13" stroke="#c8c8c8" stroke-width="1.100"/><rect x="3.500" y="2" width="6" height="4" fill="#c8c8c8"/><rect x=".5" y="7.500" width="9" height="4" fill="#c8c8c8"/></svg>
    <svg class="abs" style="left:883px;top:402px" width="13" height="12" viewBox="0 0 13 12"><path d="M0 .6h13" stroke="#c8c8c8" stroke-width="1.100"/><rect x="2" y="2.500" width="4" height="9" fill="#c8c8c8"/><rect x="7.500" y="2.500" width="4" height="6" fill="#c8c8c8"/></svg>
    <svg class="abs" style="left:905px;top:402px" width="13" height="11" viewBox="0 0 13 11"><path d="M0 5.500h13" stroke="#c8c8c8" stroke-width="1.100"/><rect x="2" y=".5" width="4" height="10" fill="#c8c8c8"/><rect x="7.500" y="2.500" width="4" height="6" fill="#c8c8c8"/></svg>
    <svg class="abs" style="left:926px;top:402px" width="13" height="12" viewBox="0 0 13 12"><path d="M0 11.400h13" stroke="#c8c8c8" stroke-width="1.100"/><rect x="2" y=".5" width="4" height="9" fill="#c8c8c8"/><rect x="7.500" y="3.500" width="4" height="6" fill="#c8c8c8"/></svg>
    <svg class="abs" style="left:938px;top:426px" width="11" height="3" viewBox="0 0 11 3"><circle cx="1.500" cy="1.500" r="1.100" fill="#d0d0d0"/><circle cx="5.500" cy="1.500" r="1.100" fill="#d0d0d0"/><circle cx="9.500" cy="1.500" r="1.100" fill="#d0d0d0"/></svg>
    <div class="abs" style="left:790px;top:434px;width:165px;height:1px;background:#515151"></div>
    <span class="t" style="left:790px;top:443px;font-size:8.600px;color:#dcdcdc">クイック操作</span>
    <div class="btn" style="left:791px;top:462px;width:81px;height:14px;line-height:12px;font-size:8.600px;font-weight:500">埋め込みを解除</div>
    <div class="btn" style="left:879px;top:462px;width:73px;height:14px;line-height:12px;font-size:8.600px;font-weight:500">マスク</div>
    <div class="btn" style="left:791px;top:484px;width:81px;height:14px;line-height:12px;font-size:8.600px;font-weight:500">画像の切り抜き</div>
    <div class="btn" style="left:879px;top:484px;width:73px;height:14px;line-height:12px;font-size:8.600px;font-weight:500">画像トレース</div>
    <div class="btn" style="left:791px;top:506px;width:161px;height:14px;line-height:12px;font-size:8.600px;font-weight:500">重ね順</div>
    <div class="btn" style="left:791px;top:528px;width:161px;height:14px;line-height:12px;font-size:8.800px">Retype (Beta)</div>
    <div class="abs" style="left:784px;top:602px;width:178px;height:1px;background:#3a3a3a"></div>
    <div class="abs" style="left:784px;top:603px;width:178px;height:5px;background:#4e4e4e"></div>
    <div class="abs" style="left:866px;top:604px;width:12px;height:2px;background:#444"></div>
  </div>
</div>
<div id="menu" class="abs" style="left:356.500px;top:18px;width:260.500px;height:617px;border-radius:6px;overflow:hidden;background:#c8c4c8;box-shadow:0 0 0 .5px rgba(0,0,0,.3),0 5px 16px rgba(0,0,0,.3)">
  <div class="abs" style="left:-356.500px;top:-18px;width:1024px;height:640px;filter:blur(24px) saturate(1.700)">
    <div class="abs" style="left:0;top:-100px;width:1024px;height:142px;background:#575757"></div>
    <div class="abs" style="left:0;top:42px;width:1024px;height:24px;background:#545454"></div>
    <div class="abs" style="left:0;top:66px;width:1024px;height:21px;background:#474747"></div>
    <div class="abs" style="left:0;top:87px;width:1024px;height:700px;background:#5f5f5f"></div>
    <div class="abs" style="left:143px;top:113px;width:604px;height:483px;background:linear-gradient(180deg,#fdf2fd 0%,#fcebfb 14%,#f9dcf5 30%,#f5c7ee 47%,#f3b9e9 62%,#f2b5e8 100%)">
      <div class="abs" style="left:0;top:0;width:604px;height:483px;background:linear-gradient(180deg,#fffdc8 0%,#fffcc9 44%,#fbf5d3 59%,#f8eedd 70%,#f5e7e6 80%,#f3e3ec 90%,#f1e0f1 100%);-webkit-mask-image:linear-gradient(90deg,#000 0%,#000 42%,rgba(0,0,0,.5) 66%,rgba(0,0,0,0) 90%);mask-image:linear-gradient(90deg,#000 0%,#000 42%,rgba(0,0,0,.5) 66%,rgba(0,0,0,0) 90%)"></div>
    </div>
  </div>
  <div class="abs" style="left:0;top:0;width:260px;height:617px;background:rgba(239,235,238,.69)"></div>
</div>
<div id="menuitems" class="abs" style="left:0;top:0;width:1024px;height:640px;pointer-events:none">
<svg class="abs" style="left:482px;top:23px" width="9" height="6" viewBox="0 0 9 6"><path d="M1 5L4.500 1.500 8 5" fill="none" stroke="#2a2a2a" stroke-width="1.400"/></svg>
<span class="t mi" style="left:373px;top:40.00px;color:#242424">カラー</span><span class="t sc" style="left:598px;top:40.00px;color:#9e9c9e">F6</span><span class="t mi" style="left:373px;top:55.63px;color:#242424">カラーガイド</span><span class="t sy" style="right:428px;top:55.63px;color:#9e9c9e">⇧</span><span class="t sc" style="left:598px;top:55.63px;color:#9e9c9e">F3</span><span class="t mi" style="left:373px;top:71.26px;color:#242424">グラデーション</span><span class="t sy" style="right:428px;top:71.26px;color:#9e9c9e">⌘</span><span class="t sc" style="left:598px;top:71.26px;color:#9e9c9e">F9</span><span class="t mi" style="left:373px;top:86.89px;color:#242424">グラフィックスタイル</span><span class="t sy" style="right:428px;top:86.89px;color:#9e9c9e">⇧</span><span class="t sc" style="left:598px;top:86.89px;color:#9e9c9e">F5</span><span class="t mi" style="left:373px;top:102.52px;color:#242424">コメント</span><span class="t mi" style="left:373px;top:118.15px;color:#242424">シンボル</span><span class="t sy" style="right:428px;top:118.15px;color:#adadad">⇧⌘</span><span class="t sc" style="left:598px;top:118.15px;color:#adadad">F11</span><span class="t mi" style="left:373px;top:133.78px;color:#242424">スウォッチ</span><span class="t mi" style="left:373px;top:149.41px;color:#242424">テキストからベクター生成<span class="la"> (Beta)</span></span><span class="t mi" style="left:373px;top:165.04px;color:#242424">ドキュメント情報</span><span class="t mi" style="left:373px;top:180.67px;color:#242424">ナビゲーター</span><span class="t mi" style="left:373px;top:196.30px;color:#242424">バージョン履歴</span><span class="t mi" style="left:373px;top:211.93px;color:#242424">パスファインダー</span><span class="t sy" style="right:428px;top:211.93px;color:#adadad">⇧⌘</span><span class="t sc" style="left:598px;top:211.93px;color:#adadad">F9</span><span class="t mi" style="left:373px;top:227.56px;color:#242424">パターンオプション</span><span class="t mi" style="left:373px;top:243.19px;color:#242424">ヒストリー</span><span class="t mi" style="left:373px;top:258.82px;color:#242424">ブラシ</span><span class="t sc" style="left:598px;top:258.82px;color:#adadad">F5</span><span class="t mi" style="left:373px;top:274.45px;color:#242424">プロパティ</span><svg class="abs" style="left:364px;top:276.95px" width="7" height="7" viewBox="0 0 7 7"><path d="M.8 3.800l1.900 2.200L6.200.8" fill="none" stroke="#1e1e1e" stroke-width="1.200"/></svg><span class="t mi" style="left:373px;top:290.08px;color:#242424">モックアップ<span class="la"> (Beta)</span></span><span class="t mi" style="left:373px;top:305.71px;color:#242424">リンク</span><span class="t mi" style="left:373px;top:321.34px;color:#242424">レイヤー</span><span class="t sc" style="left:598px;top:321.34px;color:#adadad">F7</span><span class="t mi" style="left:373px;top:336.97px;color:#242424">分割・統合プレビュー</span><span class="t mi" style="left:373px;top:352.60px;color:#242424">分版プレビュー</span><span class="t mi" style="left:373px;top:368.23px;color:#242424">変形</span><span class="t sy" style="right:428px;top:368.23px;color:#adadad">⇧</span><span class="t sc" style="left:598px;top:368.23px;color:#adadad">F8</span><span class="t mi" style="left:373px;top:383.86px;color:#242424">変数</span><span class="t mi" style="left:373px;top:399.49px;color:#242424">属性</span><span class="t sy" style="right:428px;top:399.49px;color:#adadad">⌘</span><span class="t sc" style="left:598px;top:399.49px;color:#adadad">F11</span><span class="t mi" style="left:373px;top:415.12px;color:#242424">情報</span><span class="t sy" style="right:428px;top:415.12px;color:#adadad">⌘</span><span class="t sc" style="left:598px;top:415.12px;color:#adadad">F8</span><span class="t mi" style="left:373px;top:430.75px;color:#242424">整列</span><span class="t sy" style="right:428px;top:430.75px;color:#adadad">⇧</span><span class="t sc" style="left:598px;top:430.75px;color:#adadad">F7</span><span class="t mi" style="left:373px;top:446.38px;color:#242424">書式</span><svg class="abs" style="left:602px;top:448.88px" width="5" height="7" viewBox="0 0 5 7"><path d="M1 .8l2.800 2.700L1 6.200" fill="none" stroke="#2a2a2a" stroke-width="1.300"/></svg><span class="t mi" style="left:373px;top:462.01px;color:#242424">画像トレース</span><span class="t mi" style="left:373px;top:477.64px;color:#242424">線</span><span class="t sy" style="right:428px;top:477.64px;color:#adadad">⌘</span><span class="t sc" style="left:598px;top:477.64px;color:#adadad">F10</span><span class="t mi" style="left:373px;top:493.27px;color:#242424">自動選択</span><div class="abs" style="left:360px;top:506.90px;width:253.500px;height:16px;border-radius:3px;background:#4a8bf0"></div><span class="t mi" style="left:373px;top:508.90px;color:#fff">透明</span><span class="t sy" style="right:428px;top:508.90px;color:#fff">⇧⌘</span><span class="t sc" style="left:598px;top:508.90px;color:#fff">F10</span><div class="abs" style="left:368px;top:526.500px;width:239px;height:1px;background:rgba(0,0,0,.085)"></div><span class="t mi" style="left:373px;top:532.50px;color:#242424">グラフィックスタイルライブラリ</span><svg class="abs" style="left:602px;top:535.00px" width="5" height="7" viewBox="0 0 5 7"><path d="M1 .8l2.800 2.700L1 6.200" fill="none" stroke="#2a2a2a" stroke-width="1.300"/></svg><span class="t mi" style="left:373px;top:548.13px;color:#242424">シンボルライブラリ</span><svg class="abs" style="left:602px;top:550.63px" width="5" height="7" viewBox="0 0 5 7"><path d="M1 .8l2.800 2.700L1 6.200" fill="none" stroke="#2a2a2a" stroke-width="1.300"/></svg><span class="t mi" style="left:373px;top:563.76px;color:#242424">スウォッチライブラリ</span><svg class="abs" style="left:602px;top:566.26px" width="5" height="7" viewBox="0 0 5 7"><path d="M1 .8l2.800 2.700L1 6.200" fill="none" stroke="#2a2a2a" stroke-width="1.300"/></svg><span class="t mi" style="left:373px;top:579.39px;color:#242424">ブラシライブラリ</span><svg class="abs" style="left:602px;top:581.89px" width="5" height="7" viewBox="0 0 5 7"><path d="M1 .8l2.800 2.700L1 6.200" fill="none" stroke="#2a2a2a" stroke-width="1.300"/></svg><div class="abs" style="left:368px;top:596.500px;width:239px;height:1px;background:rgba(0,0,0,.085)"></div><span class="t mi" style="left:373px;top:603px;color:#242424">シャポン玉<span class="la">.psd @ 28.77 % (RGB/</span>プレビュー)</span><span class="t mi" style="left:373px;top:618.5px;color:#242424">名称未設定<span class="la">-1* @ 37.47 % (RGB/</span>プレビュー)</span><svg class="abs" style="left:364px;top:621.0px" width="7" height="7" viewBox="0 0 7 7"><path d="M.8 3.800l1.900 2.200L6.200.8" fill="none" stroke="#1e1e1e" stroke-width="1.200"/></svg>
</div>
<!-- ===== MAC MENUBAR ===== -->
<div id="menubar" class="abs">
  <svg class="abs" style="left:14.300px;top:2.500px" width="9.800" height="11.600" viewBox="0 0 22 26"><path fill="#111" d="M15.2 0c.2 1.5-.4 2.9-1.300 4-.9 1.100-2.300 1.900-3.700 1.800-.2-1.400.5-2.900 1.300-3.800C12.400.9 14 .1 15.200 0zM19.800 8.800c-1.600 1-2.600 2.500-2.600 4.500 0 2.300 1.400 4 3.300 4.700-.4 1.300-1 2.500-1.800 3.700-1.100 1.600-2.300 3.200-4.100 3.200-1.800 0-2.300-1.100-4.300-1.100-2 0-2.600 1.100-4.300 1.100-1.800.1-3.100-1.700-4.200-3.300C-.5 18.300-1.200 12.700 1.200 9.400c1.200-1.700 3.100-2.700 5-2.700 1.900 0 3.100 1.100 4.600 1.100 1.500 0 2.400-1.100 4.600-1.100 1.700 0 3.400.8 4.400 2.100z"/></svg>
  <span class="t" style="left:39px;font-weight:700;font-size:9.6px">Illustrator</span>
  <span class="t" style="left:100px">ファイル</span>
  <span class="t" style="left:148px">編集</span>
  <span class="t" style="left:180px">オブジェクト</span>
  <span class="t" style="left:246px">書式</span>
  <span class="t" style="left:277px">選択</span>
  <span class="t" style="left:310px">効果</span>
  <span class="t" style="left:342px">表示</span>
  <div class="abs" style="left:364px;top:0;width:63px;height:17px;background:#d8aab1;border-radius:2px"></div>
  <span class="t" style="left:374px">ウィンドウ</span>
  <span class="t" style="left:431px">ヘルプ</span>
  <!-- right status icons -->
  <svg class="abs" style="left:692px;top:2px" width="14" height="13" viewBox="0 0 14 13"><circle cx="6" cy="6" r="4.300" fill="none" stroke="#4a4446" stroke-width=".9"/><path d="M4 6l1.500 1.500L8 4.500" fill="none" stroke="#4a4446" stroke-width=".9"/><circle cx="10" cy="10" r="2.800" fill="#222"/><path d="M9 9l2 2M11 9l-2 2" stroke="#efc4c8" stroke-width=".8"/></svg>
  <svg class="abs" style="left:717px;top:2px" width="14" height="13" viewBox="0 0 14 13"><ellipse cx="7" cy="6" rx="6.300" ry="5.200" fill="#1c1c1c"/><path d="M5 10.500l-.5 2.200 3-2z" fill="#1c1c1c"/><text x="7" y="7.300" font-size="3.200" font-family="Liberation Sans,sans-serif" font-weight="700" fill="#efc4c8" text-anchor="middle">LINE</text></svg>
  <svg class="abs" style="left:743px;top:2px" width="17" height="13" viewBox="0 0 17 13"><ellipse cx="7" cy="6.500" rx="5" ry="4.800" fill="none" stroke="#222" stroke-width="1.200"/><ellipse cx="10" cy="7" rx="5" ry="4.200" fill="none" stroke="#222" stroke-width="1.200"/><path d="M4 9c2-3 5-4 9-3" fill="none" stroke="#222" stroke-width="1.100"/><circle cx="13" cy="10" r="2.200" fill="#3c6fb0"/></svg>
  <div class="abs" style="left:774px;top:3px;width:15px;height:11px;background:#222;border-radius:2px"></div>
  <span class="t" style="left:777.400px;top:3px;color:#efc4c8;font-size:8.200px;font-weight:700">あ</span>
  <svg class="abs" style="left:803px;top:4px" width="19" height="9" viewBox="0 0 19 9"><rect x=".5" y=".5" width="15" height="8" rx="2.200" fill="none" stroke="#8c7c80" stroke-width="1"/><rect x="1.800" y="1.800" width="2.600" height="5.400" rx=".8" fill="#1c1c1c"/><path d="M16.800 3v3c1-.3 1-2.700 0-3z" fill="#8c7c80"/></svg>
  <svg class="abs" style="left:834.500px;top:4px" width="12.500" height="9.400" viewBox="0 0 16 12"><path d="M1 4.200a10 10 0 0 1 14 0" fill="none" stroke="#1c1c1c" stroke-width="2.100"/><path d="M3.500 6.800a6.500 6.500 0 0 1 9 0" fill="none" stroke="#1c1c1c" stroke-width="2.100"/><path d="M5.900 9.200L8 11.300l2.100-2.100a3 3 0 0 0-4.200 0z" fill="#1c1c1c"/></svg>
  <svg class="abs" style="left:860.500px;top:3.500px" width="10.500" height="10.500" viewBox="0 0 12 12"><circle cx="4.800" cy="4.800" r="3.500" fill="none" stroke="#222" stroke-width="1.300"/><path d="M7.400 7.400l3.300 3.300" stroke="#222" stroke-width="1.400" stroke-linecap="round"/></svg>
  <svg class="abs" style="left:883.500px;top:3.500px" width="13.500" height="10.800" viewBox="0 0 15 12"><rect x=".5" y=".8" width="11" height="4.400" rx="2.200" fill="#222"/><circle cx="9" cy="3" r="1.300" fill="#efc4c8"/><rect x=".5" y="6.800" width="11" height="4.400" rx="2.200" fill="none" stroke="#222" stroke-width="1"/><circle cx="3" cy="9" r="1.500" fill="#222"/><circle cx="13.500" cy="6" r="1.200" fill="#6a3fd0"/></svg>
  <svg class="abs" style="left:906px;top:3.200px" width="11.500" height="11.500" viewBox="0 0 12 12"><defs><linearGradient id="siri" x1="0" y1="0" x2="1" y2="1"><stop offset="0" stop-color="#e24bd0"/><stop offset=".5" stop-color="#4a7df0"/><stop offset="1" stop-color="#35d0c0"/></linearGradient></defs><circle cx="6" cy="6" r="5.200" fill="url(#siri)"/><circle cx="6" cy="6" r="2.600" fill="#f4e8f4"/></svg>
  <span class="t" style="left:929px;font-size:9.600px;font-weight:500;-webkit-text-stroke:.25px #141414">1月28日(火)</span>
  <span class="t" style="left:986px;font-size:9.600px;font-weight:500;-webkit-text-stroke:.25px #141414;letter-spacing:.1px">13:02</span>
</div>
</div>
</body>
</html>
